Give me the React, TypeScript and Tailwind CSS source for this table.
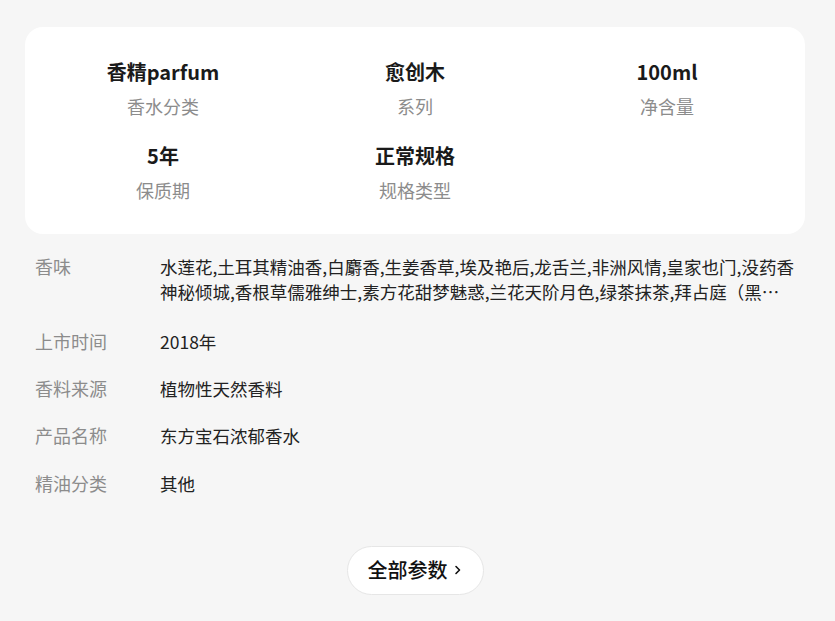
import React from 'react';

const font = { fontFamily: '"Noto Sans CJK SC", "Noto Sans", sans-serif' };

const specs = [
    { value: '香精parfum', label: '香水分类' },
    { value: '愈创木', label: '系列' },
    { value: '100ml', label: '净含量' },
    { value: '5年', label: '保质期' },
    { value: '正常规格', label: '规格类型' },
];

const rows = [
    {
        label: '香味',
        value: '水莲花,土耳其精油香,白麝香,生姜香草,埃及艳后,龙舌兰,非洲风情,皇家也门,没药香神秘倾城,香根草儒雅绅士,素方花甜梦魅惑,兰花天阶月色,绿茶抹茶,拜占庭（黑玫瑰）,摩洛哥玫瑰',
    },
    { label: '上市时间', value: '2018年' },
    { label: '香料来源', value: '植物性天然香料' },
    { label: '产品名称', value: '东方宝石浓郁香水' },
    { label: '精油分类', value: '其他' },
];

export default function App() {
    return (
        <div className="min-h-screen bg-[#f6f6f6] pl-[25px] pr-[30px] pt-[27px]" style={font}>
            {/* Key specs card */}
            <div className="bg-white rounded-[18px] px-3 pt-[30px] pb-[31px] grid grid-cols-3 gap-y-[22px]">
                {specs.map((s, idx) => (
                    <div key={idx} className="flex flex-col items-center">
                        <div className="text-[20px] leading-[30px] font-bold text-[#1a1a1a]">{s.value}</div>
                        <div className="text-[18px] leading-[26px] mt-[6px] text-[#8c8c8c]">{s.label}</div>
                    </div>
                ))}
            </div>

            {/* Detail rows */}
            <div className="pt-[9px]">
                {rows.map((r, idx) => (
                    <div key={idx} className={`flex py-[11.2px] ${idx === 0 ? 'mb-[2px]' : ''}`}>
                        <div className="w-[135px] shrink-0 pl-[10px] text-[18px] leading-[25px] text-[#8c8c8c]">{r.label}</div>
                        <div className="flex-1 pr-[9px] text-[17.5px] leading-[25px] text-[#222] line-clamp-2">{r.value}</div>
                    </div>
                ))}
            </div>

            <div className="flex justify-center mt-[39px]">
                <button className="h-[49px] px-[20px] rounded-full bg-white border border-[#e6e6e6] flex items-center gap-[5px] text-[20px] font-medium text-[#111]">
                    全部参数
                    <svg className="w-[10px] h-[12px]" viewBox="0 0 10 12" fill="none">
                        <path d="M3 2.5l3.5 3.5-3.5 3.5" stroke="#111" strokeWidth="1.6" strokeLinecap="round" strokeLinejoin="round" />
                    </svg>
                </button>
            </div>
        </div>
    );
}
